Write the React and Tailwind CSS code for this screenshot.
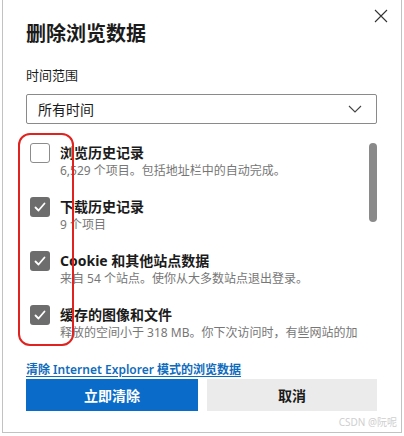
import { useState } from "react";

const items = [
  { title: "浏览历史记录", desc: "6,529 个项目。包括地址栏中的自动完成。", checked: false },
  { title: "下载历史记录", desc: "9 个项目", checked: true },
  { title: "Cookie 和其他站点数据", desc: "来自 54 个站点。使你从大多数站点退出登录。", checked: true },
  { title: "缓存的图像和文件", desc: "释放的空间小于 318 MB。你下次访问时，有些网站的加", checked: true },
];

const font = { fontFamily: '"Noto Sans", "Noto Sans CJK SC", sans-serif' };

const CheckBox = ({ checked, onClick }) => (
  <button
    onClick={onClick}
    className={`w-[20px] h-[20px] shrink-0 rounded-[3px] flex items-center justify-center ${
      checked ? "bg-[#6d6d6d]" : "border border-[#8c8c8c] bg-white"
    }`}
  >
    {checked && (
      <svg width="14" height="14" viewBox="0 0 14 14">
        <path d="M2.5 7.5 L5.5 10.5 L11.5 3.5" fill="none" stroke="#fff" strokeWidth="1.8" strokeLinecap="round" strokeLinejoin="round" />
      </svg>
    )}
  </button>
);

const App = () => {
  const [checks, setChecks] = useState(items.map((i) => i.checked));

  const toggle = (idx) => {
    setChecks(checks.map((c, i) => (i === idx ? !c : c)));
  };

  return (
    <div className="w-[404px] h-[436px] bg-white px-[2px] pb-[3px]" style={font}>
      <div className="relative h-full border-l border-r border-b border-[#c2c2c2] bg-white pl-[23px] pr-[24px]">
        {/* close */}
        <button className="absolute top-[9px] right-[13px] w-[14px] h-[14px]">
          <svg width="14" height="14" viewBox="0 0 14 14">
            <path d="M1 1 L13 13 M13 1 L1 13" stroke="#333" strokeWidth="1.1" />
          </svg>
        </button>

        <h1 className="pt-[20px] text-[20px] leading-[28px] font-bold text-[#1b1b1b]">删除浏览数据</h1>

        <div className="mt-[18px] text-[13px] leading-[18px] text-[#1b1b1b]">时间范围</div>

        <div className="mt-[10px] h-[30px] border border-[#8a8a8a] rounded-[2px] flex items-center justify-between pl-[11px] pr-[14px]">
          <span className="text-[14px] text-[#1b1b1b]">所有时间</span>
          <svg width="14" height="8" viewBox="0 0 14 8">
            <path d="M1 1 L7 7 L13 1" fill="none" stroke="#444" strokeWidth="1.1" />
          </svg>
        </div>

        {/* list */}
        <div className="mt-[10px] h-[208px] flex">
          <div className="flex-1 overflow-hidden pt-[9px] pl-[4px] pr-[10px] flex flex-col gap-[18px]">
            {items.map((item, idx) => (
              <div key={idx} className="flex gap-[10px]">
                <CheckBox checked={checks[idx]} onClick={() => toggle(idx)} />
                <div className="min-w-0">
                  <div className="text-[14px] leading-[20px] font-bold text-[#1b1b1b]">{item.title}</div>
                  <div className="text-[12px] leading-[16px] text-[#767676] whitespace-nowrap">{item.desc}</div>
                </div>
              </div>
            ))}
          </div>
          <div className="w-[8px] pt-[9px] shrink-0">
            <div className="h-[79px] rounded-full bg-[#8a8a8a]"></div>
          </div>
        </div>

        <a href="#" className="block mt-[19px] text-[12px] leading-[18px] font-semibold text-[#0f6cbd] underline underline-offset-[2px] w-fit">
          清除 Internet Explorer 模式的浏览数据
        </a>

        <div className="flex gap-[9px]">
          <button className="w-[172px] h-[32px] bg-[#0a6cc8] text-white text-[14px] font-bold">立即清除</button>
          <button className="flex-1 h-[32px] bg-[#ebebeb] text-[#1b1b1b] text-[14px] font-bold">取消</button>
        </div>

        <div className="absolute right-[4px] bottom-[4px] text-[10px] leading-[12px] text-[#cfcfcf]">CSDN @阮呢</div>

        {/* annotation */}
        <div className="absolute left-[15px] top-[133px] w-[56px] h-[213px] border-2 border-[#e0231f] rounded-[12px] pointer-events-none"></div>
      </div>
    </div>
  );
};

export default App;
